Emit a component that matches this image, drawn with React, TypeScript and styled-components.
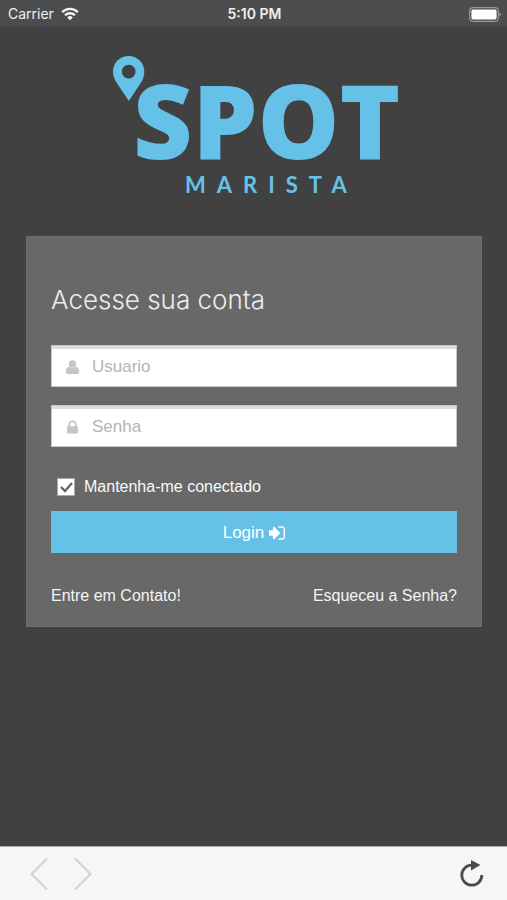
import React from "react";
import styled, { createGlobalStyle } from "styled-components";

const GlobalStyle = createGlobalStyle`
  *, *::before, *::after { box-sizing: border-box; }
  body {
    margin: 0;
    background: #414141;
    font-family: "Liberation Sans", Helvetica, Arial, sans-serif;
  }
`;

const Screen = styled.div`
  display: flex;
  flex-direction: column;
  min-height: 100vh;
`;

const StatusBar = styled.header`
  display: grid;
  grid-template-columns: 1fr auto 1fr;
  align-items: center;
  height: 28px;
  padding: 0 6px 0 8px;
  background: linear-gradient(#4c4d4f 24px, #444444);
  color: #f0f0f0;
  font-family: Inter, sans-serif;
  font-size: 14px;
  line-height: 28px;
`;

const Carrier = styled.div`
  display: flex;
  align-items: center;
  gap: 7px;
`;

const Clock = styled.time`
  font-weight: 600;
`;

const BatterySlot = styled.div`
  display: flex;
  justify-content: flex-end;
`;

const Main = styled.main`
  flex: 1;
  padding: 26px 25px 40px 26px;
`;

const Logo = styled.svg`
  display: block;
  width: 284px;
  height: 142px;
  margin: 0 auto 40px;
  overflow: visible;
  fill: #66c1e9;
`;

const Wordmark = styled.text`
  font-family: "Open Sans", sans-serif;
  font-size: 103px;
  font-weight: 800;
`;

const Subtitle = styled.text`
  font-family: Lato, sans-serif;
  font-size: 22px;
  font-weight: 700;
  letter-spacing: 11px;
`;

const Card = styled.form`
  display: flex;
  flex-direction: column;
  padding: 46px 24px 19px;
  border: 1px solid #707070;
  background: #686868;
`;

const Title = styled.h1`
  margin: 0 0 28px;
  color: #ececec;
  font-family: Inter, "Liberation Sans", sans-serif;
  font-size: 26px;
  font-weight: 300;
  line-height: 34px;
`;

const Field = styled.label`
  display: flex;
  align-items: center;
  gap: 11px;
  height: 42px;
  margin-bottom: 18px;
  padding: 2px 12px 0;
  border: 1px solid #c8c8c8;
  background: #ffffff;
  box-shadow: inset 0 3px 0 #dedede;
`;

const FieldIcon = styled.svg`
  flex: none;
  width: 17px;
  height: 17px;
  fill: #c6c6c6;
`;

const Input = styled.input`
  flex: 1;
  min-width: 0;
  padding: 0;
  border: 0;
  outline: 0;
  background: transparent;
  color: #444444;
  font: inherit;
  font-size: 17px;
  line-height: 24px;

  &::placeholder {
    color: #b4b4b4;
    opacity: 1;
  }
`;

const Remember = styled.label`
  display: flex;
  align-items: center;
  gap: 9px;
  margin: 11px 0 13px 6px;
  color: #fafafa;
  font-size: 16px;
  line-height: 22px;
`;

const Checkbox = styled.input`
  appearance: none;
  width: 18px;
  height: 18px;
  margin: 0;
  border: 1px solid #aaaaaa;
  background: #ffffff;

  &:checked {
    background: #ffffff
      url("data:image/svg+xml,%3Csvg xmlns='http://www.w3.org/2000/svg' viewBox='0 0 16 16'%3E%3Cpath d='M3 8l4 4 7-8' fill='none' stroke='%23666' stroke-width='2.4'/%3E%3C/svg%3E")
      center / 16px 16px no-repeat;
  }
`;

const LoginButton = styled.button`
  display: flex;
  align-items: center;
  justify-content: center;
  gap: 5px;
  height: 42px;
  padding: 1px 0 0;
  border: 0;
  background: #66c1e9;
  color: #ffffff;
  font: inherit;
  font-size: 17px;
`;

const LoginIcon = styled.svg`
  width: 16px;
  height: 16px;
  fill: currentColor;
`;

const Links = styled.nav`
  display: flex;
  justify-content: space-between;
  margin-top: 32px;
`;

const TextLink = styled.a`
  color: #f4f4f4;
  font-size: 16px;
  line-height: 22px;
  text-decoration: none;
`;

const Toolbar = styled.footer`
  display: flex;
  align-items: center;
  height: 54px;
  padding: 0 22px 0 30px;
  border-top: 1px solid #b0b0b0;
  background: #f6f6f6;
`;

const ToolButton = styled.button<{ $end?: boolean }>`
  display: flex;
  margin: 0 ${(p) => (p.$end ? "0 0 auto" : "26px 0 0")};
  padding: 0;
  border: 0;
  background: none;
`;

export default function App() {
  return (
    <Screen>
      <GlobalStyle />
      <StatusBar>
        <Carrier>
          <span>Carrier</span>
          <svg width="18" height="14" viewBox="0 0 18 14" aria-hidden="true">
            <g fill="none" stroke="#f4f4f4" strokeWidth="2.3">
              <path d="M1.2 5.2a11 11 0 0 1 15.6 0" />
              <path d="M4 8.3a7.1 7.1 0 0 1 10 0" />
            </g>
            <path d="M9 13.2L6.2 10.4a4 4 0 0 1 5.6 0z" fill="#f4f4f4" />
          </svg>
        </Carrier>
        <Clock>5:10 PM</Clock>
        <BatterySlot>
          <svg width="32" height="15" viewBox="0 0 32 15" role="img" aria-label="Bateria">
            <rect x="0.7" y="0.7" width="28.6" height="13.6" rx="3.5" fill="none" stroke="#98999b" strokeWidth="1.2" />
            <rect x="2.4" y="2.4" width="25.2" height="10.2" rx="1.8" fill="#ffffff" />
            <path d="M30.4 5.2q1.5.8 1.5 2.3t-1.5 2.3z" fill="#98999b" />
          </svg>
        </BatterySlot>
      </StatusBar>

      <Main>
        <Logo viewBox="0 0 284 142" role="img" aria-label="Spot Marista">
          <path
            fillRule="evenodd"
            d="M16.500 2C7.700 2 1 9 1 17.500C1 21 2 24 3.500 27L16.800 47L30 27C31.500 24 32.300 21 32.300 17.500C32.300 9 25.500 2 16.500 2ZM16.700 10.700A6.900 6.900 0 1 1 16.700 24.500A6.900 6.900 0 1 1 16.700 10.700Z"
          />
          <Wordmark x="21" y="105">SPOT</Wordmark>
          <Subtitle x="73" y="139">MARISTA</Subtitle>
        </Logo>

        <Card onSubmit={(e) => e.preventDefault()}>
          <Title>Acesse sua conta</Title>
          <Field>
            <FieldIcon viewBox="0 0 17 17" aria-hidden="true">
              <ellipse cx="8.500" cy="5" rx="3.700" ry="3.800" />
              <path d="M1.800 13c0-3 1-5.200 3.500-5.200 1.900 1.700 4.500 1.700 6.400 0 2.500 0 3.500 2.200 3.500 5.200 0 1.300-.8 2-2 2H3.800c-1.200 0-2-.7-2-2z" />
            </FieldIcon>
            <Input type="text" placeholder="Usuario" aria-label="Usuario" />
          </Field>
          <Field>
            <FieldIcon viewBox="0 0 1792 1792" aria-hidden="true">
              <path d="M640 768h512v-192q0-106-75-181t-181-75-181 75-75 181v192zm832 96v576q0 40-28 68t-68 28h-960q-40 0-68-28t-28-68v-576q0-40 28-68t68-28h32v-192q0-184 132-316t316-132 316 132 132 316v192h32q40 0 68 28t28 68z" />
            </FieldIcon>
            <Input type="password" placeholder="Senha" aria-label="Senha" />
          </Field>
          <Remember>
            <Checkbox type="checkbox" defaultChecked />
            Mantenha-me conectado
          </Remember>
          <LoginButton type="submit">
            Login
            <LoginIcon viewBox="128 128 1536 1536" aria-hidden="true">
              <path d="M1184 896q0 26-19 45l-544 544q-19 19-45 19t-45-19-19-45v-288h-448q-26 0-45-19t-19-45v-384q0-26 19-45t45-19h448v-288q0-26 19-45t45-19 45 19l544 544q19 19 19 45zm480-352v704q0 119-84.5 203.5t-203.5 84.5h-320q-13 0-22.5-9.5t-9.5-22.5q0-4-1-20t-.5-26.5 3-23.5 10-19.5 20.5-6.5h320q66 0 113-47t47-113v-704q0-66-47-113t-113-47h-312l-11.5-1-11.5-3-8-5.5-7-9-2-13.5q0-4-1-20t-.5-26.5 3-23.5 10-19.5 20.5-6.5h320q119 0 203.5 84.5t84.5 203.5z" />
            </LoginIcon>
          </LoginButton>
          <Links>
            <TextLink href="#contato">Entre em Contato!</TextLink>
            <TextLink href="#senha">Esqueceu a Senha?</TextLink>
          </Links>
        </Card>
      </Main>

      <Toolbar>
        <ToolButton type="button" aria-label="Voltar">
          <svg width="18" height="34" viewBox="0 0 18 34" fill="none" stroke="#d2d2d2" strokeWidth="2">
            <path d="M17 1.500L1.500 17L17 32.500" />
          </svg>
        </ToolButton>
        <ToolButton type="button" aria-label="Avançar">
          <svg width="18" height="34" viewBox="0 0 18 34" fill="none" stroke="#d2d2d2" strokeWidth="2">
            <path d="M1 1.500L16.500 17L1 32.500" />
          </svg>
        </ToolButton>
        <ToolButton type="button" aria-label="Recarregar" $end>
          <svg width="26" height="28" viewBox="0 0 26 28">
            <path d="M13 5.200A10 10 0 1 0 22.800 15" fill="none" stroke="#4a4a4a" strokeWidth="2.800" />
            <path d="M12 0L21.500 5L12 10.500Z" fill="#4a4a4a" />
          </svg>
        </ToolButton>
      </Toolbar>
    </Screen>
  );
}
